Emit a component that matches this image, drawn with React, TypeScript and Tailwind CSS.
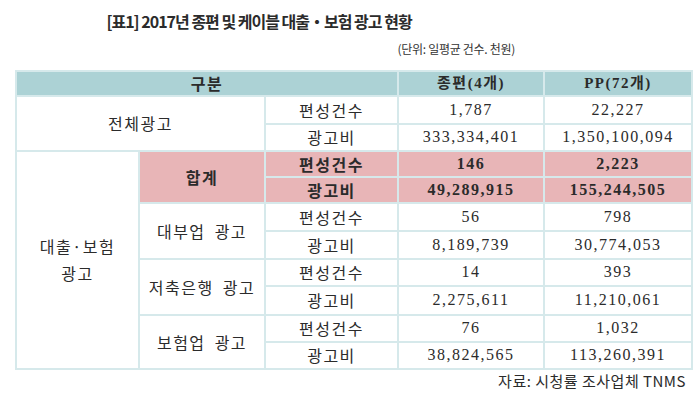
const kr = "font-['Noto_Sans_CJK_KR',sans-serif]";
const lab = "font-['Noto_Sans_CJK_KR',sans-serif] tracking-[1.5px] [word-spacing:4px]";
const num = "font-['Liberation_Serif','Noto_Sans_CJK_KR',serif] tracking-[1.5px]";

const cell = "border-2 border-[#d6e9eb] text-center align-middle p-0";
const pink = "bg-[#e8b5b7]";

type Group = { name: string; rows: [string, string, string][]; total?: boolean };

const groups: Group[] = [
  {
    name: "합계",
    total: true,
    rows: [
      ["편성건수", "146", "2,223"],
      ["광고비", "49,289,915", "155,244,505"],
    ],
  },
  {
    name: "대부업 광고",
    rows: [
      ["편성건수", "56", "798"],
      ["광고비", "8,189,739", "30,774,053"],
    ],
  },
  {
    name: "저축은행 광고",
    rows: [
      ["편성건수", "14", "393"],
      ["광고비", "2,275,611", "11,210,061"],
    ],
  },
  {
    name: "보험업 광고",
    rows: [
      ["편성건수", "76", "1,032"],
      ["광고비", "38,824,565", "113,260,391"],
    ],
  },
];

const heights = ["h-[25px]", "h-[24px]", "h-[28px]", "h-[28px]", "h-[27px]", "h-[29px]", "h-[27px]", "h-[27px]"];

export default function App() {
  return (
    <div className="w-[700px] h-[406px] bg-white text-[#2b2b2b] relative">
      <div className="w-[518px] pt-[11px]">
        <h1 className={`${kr} text-center font-bold text-[16px] leading-[20px] tracking-[-1px]`}>
          [표1] 2017년 종편 및 케이블 대출・보험 광고 현황
        </h1>
        <p className={`${kr} text-right text-[12px] leading-[16px] tracking-[-0.3px] mt-[10px] pr-[3px] text-[#333]`}>
          (단위: 일평균 건수. 천원)
        </p>
      </div>

      <div className="pl-[15px] mt-[13px]">
        <table className="border-collapse border-2 border-[#7fb5ba] table-fixed w-[676px]">
          <colgroup>
            <col className="w-[123px]" />
            <col className="w-[126px]" />
            <col className="w-[133px]" />
            <col className="w-[146px]" />
            <col className="w-[148px]" />
          </colgroup>
          <tbody>
            <tr className="h-[24px] bg-[#acd2d5]">
              <td colSpan={3} className={`${cell} ${lab} font-bold text-[16px] leading-[20px]`}>
                구분
              </td>
              <td className={`${cell} ${num} font-bold text-[15px] tracking-[0px]`}>종편(4개)</td>
              <td className={`${cell} ${num} font-bold text-[15px] tracking-[0px]`}>PP(72개)</td>
            </tr>
            <tr className="h-[28px]">
              <td colSpan={2} rowSpan={2} className={`${cell} ${lab} text-[16px]`}>
                전체광고
              </td>
              <td className={`${cell} ${lab} text-[16px]`}>편성건수</td>
              <td className={`${cell} ${num} text-[16px]`}>1,787</td>
              <td className={`${cell} ${num} text-[16px]`}>22,227</td>
            </tr>
            <tr className="h-[27px]">
              <td className={`${cell} ${lab} text-[16px]`}>광고비</td>
              <td className={`${cell} ${num} text-[16px]`}>333,334,401</td>
              <td className={`${cell} ${num} text-[16px]`}>1,350,100,094</td>
            </tr>
            {groups.map((g, gi) =>
              g.rows.map((r, ri) => {
                const tone = g.total ? `${pink} font-bold` : "";
                return (
                  <tr key={`${gi}-${ri}`} className={heights[gi * 2 + ri]}>
                    {gi === 0 && ri === 0 && (
                      <td rowSpan={8} className={`${cell} ${lab} text-[16px] leading-[27px]`}>
                        대출·보험
                        <br />
                        광고
                      </td>
                    )}
                    {ri === 0 && (
                      <td rowSpan={2} className={`${cell} ${lab} text-[16px] ${tone}`}>
                        {g.name}
                      </td>
                    )}
                    <td className={`${cell} ${lab} text-[16px] leading-[20px] ${tone}`}>{r[0]}</td>
                    <td className={`${cell} ${num} text-[16px] ${tone}`}>{r[1]}</td>
                    <td className={`${cell} ${num} text-[16px] ${tone}`}>{r[2]}</td>
                  </tr>
                );
              })
            )}
          </tbody>
        </table>
        <p className={`${kr} text-right text-[15px] leading-[18px] tracking-[0.5px] w-[671px] mt-[2px]`}>
          자료: 시청률 조사업체 TNMS
        </p>
      </div>
    </div>
  );
}
